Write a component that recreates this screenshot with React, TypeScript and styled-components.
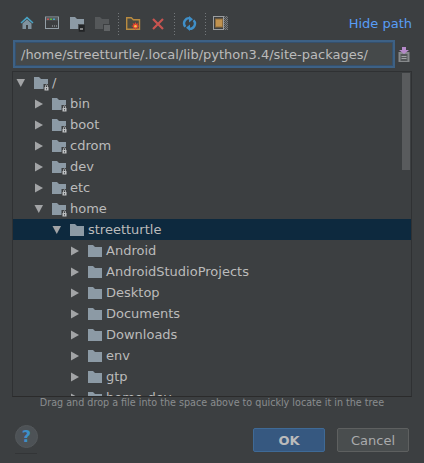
import React from "react";
import styled, { createGlobalStyle } from "styled-components";

const Global = createGlobalStyle`
  html, body { margin: 0; padding: 0; background: #3c3f41; }
  * { box-sizing: border-box; }
`;

const Dialog = styled.div`
  width: 424px;
  height: 463px;
  background: #3c3f41;
  font-family: "DejaVu Sans", sans-serif;
  display: flex;
  flex-direction: column;
  overflow: hidden;
`;

const TopBar = styled.div`
  height: 40px;
  padding: 13px 12px 0 20px;
  display: flex;
  align-items: flex-start;
  justify-content: space-between;
`;

const Tools = styled.div`
  display: flex;
  align-items: flex-start;
  height: 22px;
`;

const ToolSlot = styled.div<{ $w: number }>`
  width: ${(p) => p.$w}px;
  height: 22px;
  padding-top: 3px;
  flex: none;
  svg { display: block; }
`;

const Dots = styled.div`
  width: 8px;
  height: 22px;
  flex: none;
  background-image: linear-gradient(#73777a 1px, transparent 1px);
  background-size: 1px 3px;
  background-repeat: repeat-y;
  background-position: 0 0;
`;

const HideLink = styled.a`
  color: #589df6;
  font-size: 13px;
  line-height: 20px;
  margin-top: 1px;
`;

const PathRow = styled.div`
  height: 31px;
  padding: 0 0 0 13px;
  display: flex;
  align-items: flex-start;
`;

const PathField = styled.div`
  width: 382px;
  height: 28px;
  border: 2px solid #3d6185;
  outline: 1px solid #35506c;
  outline-offset: -3px;
  background: #45494a;
  color: #bbbbbb;
  font-size: 13px;
  line-height: 25px;
  padding-left: 6px;
  white-space: nowrap;
`;

const PasteIcon = styled.div`
  margin: 7px 0 0 3px;
  svg { display: block; }
`;

const TreeBox = styled.div`
  position: relative;
  margin: 0 12px;
  width: 400px;
  height: 326px;
  border: 1px solid #2f3133;
  border-bottom-color: #2b2b2b;
  overflow: hidden;
  flex: none;
`;

const Row = styled.div<{ $selected?: boolean; $level: number }>`
  height: 21px;
  display: flex;
  align-items: center;
  padding-left: ${(p) => 3 + p.$level * 18}px;
  background: ${(p) => (p.$selected ? "#0d293e" : "transparent")};
  color: #bbbbbb;
  font-size: 13px;
  white-space: nowrap;
`;

const Arrow = styled.div`
  width: 18px;
  height: 21px;
  flex: none;
  display: flex;
  align-items: center;
  svg { display: block; }
`;

const FolderSlot = styled.div`
  width: 18px;
  height: 21px;
  padding-top: 2px;
  flex: none;
  display: flex;
  align-items: center;
  svg { display: block; }
`;

const Scrollbar = styled.div`
  position: absolute;
  right: 1px;
  top: 1px;
  width: 8px;
  height: 97px;
  background: #595b5d;
`;

const Hint = styled.div`
  height: 16px;
  text-align: center;
  font-size: 9.6px;
  line-height: 11px;
  color: #8a8d8f;
  white-space: nowrap;
`;

const Footer = styled.div`
  flex: 1;
  padding: 12px 15px 0 15px;
  display: flex;
  align-items: flex-start;
  justify-content: space-between;
`;

const Help = styled.div`
  position: relative;
  width: 23px;
  height: 23px;
  border-radius: 50%;
  background: #4d5256;
  border: 1px solid #54585b;
  color: #3d8fc8;
  font-size: 16px;
  font-weight: bold;
  line-height: 21px;
  text-align: center;
  &::after {
    content: "";
    position: absolute;
    left: -1px;
    top: 27px;
    width: 22px;
    height: 1px;
    background: #333537;
  }
`;

const Buttons = styled.div`
  display: flex;
  gap: 12px;
  margin-top: 3px;
`;

const Button = styled.button<{ $primary?: boolean }>`
  width: 72px;
  height: 24px;
  padding: 1px 0 0;
  border-radius: 2px;
  border: 1px solid ${(p) => (p.$primary ? "#3f6a96" : "#5e6060")};
  background: ${(p) => (p.$primary ? "#365880" : "#494d4e")};
  color: ${(p) => (p.$primary ? "#bbbbbb" : "#a9abac")};
  font-family: "DejaVu Sans", sans-serif;
  font-size: 13px;
  font-weight: ${(p) => (p.$primary ? "bold" : "normal")};
`;

const ArrowIcon = ({ open }: { open: boolean }) =>
  open ? (
    <svg width="10" height="10" viewBox="0 0 10 10">
      <path d="M0.5 1h8.5L4.75 9z" fill="#a2a4a6" />
    </svg>
  ) : (
    <svg width="10" height="10" viewBox="0 0 10 10" style={{ marginLeft: 1 }}>
      <path d="M0 0.5v9L8 5z" fill="#a2a4a6" />
    </svg>
  );

const FolderIcon = ({ locked }: { locked: boolean }) => (
  <svg width="16" height="14" viewBox="0 0 16 14">
    <path d="M0 0h5l2 2h7v10H0z" fill="#8c9aa5" />
    {locked && (
      <g>
        <rect x="9.5" y="7" width="6.5" height="7" fill="#3c3f41" />
        <rect x="10.5" y="10" width="4" height="3.5" fill="#bfc2c4" />
        <path d="M11.5 10V8.8a1 1 0 0 1 2 0V10" fill="none" stroke="#bfc2c4" strokeWidth="0.8" />
        <rect x="12" y="11" width="1" height="1.5" fill="#55585a" />
      </g>
    )}
  </svg>
);

type Node = { label: string; level: number; open?: boolean; locked?: boolean; selected?: boolean };

const nodes: Node[] = [
  { label: "/", level: 0, open: true, locked: true },
  { label: "bin", level: 1, locked: true },
  { label: "boot", level: 1, locked: true },
  { label: "cdrom", level: 1, locked: true },
  { label: "dev", level: 1, locked: true },
  { label: "etc", level: 1, locked: true },
  { label: "home", level: 1, open: true, locked: true },
  { label: "streetturtle", level: 2, open: true, selected: true },
  { label: "Android", level: 3 },
  { label: "AndroidStudioProjects", level: 3 },
  { label: "Desktop", level: 3 },
  { label: "Documents", level: 3 },
  { label: "Downloads", level: 3 },
  { label: "env", level: 3 },
  { label: "gtp", level: 3 },
  { label: "home-dev", level: 3 },
];

export default function App() {
  return (
    <Dialog>
      <Global />
      <TopBar>
        <Tools>
          <ToolSlot $w={25}>
            <svg width="14" height="13" viewBox="0 0 14 13">
              <path d="M7 0.5L0.5 6.5l1 1L7 2.7l5.5 4.8 1-1z" fill="#4aa3c4" />
              <path d="M7 3.6L2.5 7.6V13H6V9h2v4h3.5V7.6z" fill="#7f929e" />
            </svg>
          </ToolSlot>
          <ToolSlot $w={25}>
            <svg width="14" height="13" viewBox="0 0 14 13">
              <rect x="0.5" y="1" width="13" height="11.5" fill="#3c3f41" stroke="#939fa7" />
              <rect x="1" y="1.5" width="12" height="3" fill="#54595c" />
              <rect x="2" y="2.5" width="2" height="1.5" fill="#c75450" />
              <rect x="5" y="2.5" width="2" height="1.5" fill="#62b543" />
              <rect x="8" y="2.5" width="2" height="1.5" fill="#4aa3c4" />
              <rect x="7" y="9.5" width="1" height="1" fill="#a8b0b5" />
              <rect x="9" y="9.5" width="1" height="1" fill="#a8b0b5" />
              <rect x="11" y="9.5" width="1" height="1" fill="#a8b0b5" />
            </svg>
          </ToolSlot>
          <ToolSlot $w={25}>
            <svg width="15" height="15" viewBox="0 0 15 15" style={{ marginTop: 1 }}>
              <path d="M0 0h5l2 2h7v10H0z" fill="#8c9aa5" />
              <rect x="8.5" y="7.5" width="6.5" height="7.5" fill="#222426" stroke="#3c3f41" strokeWidth="0.5" />
              <rect x="10" y="11.5" width="3" height="1" fill="#e0e0e0" />
            </svg>
          </ToolSlot>
          <ToolSlot $w={23}>
            <svg width="15" height="15" viewBox="0 0 15 15" style={{ marginTop: 1 }}>
              <path d="M0 0h5l2 2h7v10H0z" fill="#55585a" />
              <rect x="8" y="7" width="7" height="8" fill="#3c3f41" />
              <rect x="9" y="8" width="6" height="6" fill="#606365" />
            </svg>
          </ToolSlot>
          <Dots />
          <ToolSlot $w={26}>
            <svg width="15" height="15" viewBox="0 0 15 15" style={{ marginTop: 1 }}>
              <path d="M0.7 0.7h4.6l2 2h6.2v9.6H0.7z" fill="#4a4a42" stroke="#b98b40" strokeWidth="1.4" />
              <path d="M9.5 5l0.9 2.1 2-1-0.9 2.2 2.3 0.8-2.3 0.8 0.9 2.2-2-1-0.9 2.1-0.9-2.1-2 1 0.9-2.2-2.3-0.8 2.3-0.8-0.9-2.2 2 1z" fill="#e8432e" />
              <circle cx="9.5" cy="9.2" r="1.3" fill="#f6c04a" />
            </svg>
          </ToolSlot>
          <ToolSlot $w={22}>
            <svg width="12" height="12" viewBox="0 0 12 12" style={{ marginTop: 2 }}>
              <path d="M1 1l10 10M11 1L1 11" stroke="#c75450" strokeWidth="2.2" />
            </svg>
          </ToolSlot>
          <Dots />
          <ToolSlot $w={23}>
            <svg width="15" height="15" viewBox="0 0 15 15">
              <path d="M8 2.2A5.2 5.2 0 0 0 3.4 10.8" fill="none" stroke="#3f8fc8" strokeWidth="2.4" />
              <path d="M7 12.8A5.2 5.2 0 0 0 11.6 4.2" fill="none" stroke="#3f8fc8" strokeWidth="2.4" />
              <path d="M7 0L11 3.2 7 6.4z" fill="#3f8fc8" />
              <path d="M8 15L4 11.8 8 8.6z" fill="#3f8fc8" />
            </svg>
          </ToolSlot>
          <Dots />
          <ToolSlot $w={16}>
            <svg width="15" height="14" viewBox="0 0 15 14">
              <defs>
                <pattern id="chk" width="2" height="2" patternUnits="userSpaceOnUse">
                  <rect width="2" height="2" fill="#77797b" />
                  <rect width="1" height="1" fill="#45484a" />
                  <rect x="1" y="1" width="1" height="1" fill="#45484a" />
                </pattern>
              </defs>
              <rect width="15" height="14" fill="url(#chk)" />
              <rect x="0.5" y="0.5" width="10" height="13" fill="#3c3f41" stroke="#9b9d9f" />
              <rect x="2.5" y="3" width="7" height="8" fill="#c0924f" stroke="#8c6a3b" />
            </svg>
          </ToolSlot>
        </Tools>
        <HideLink>Hide path</HideLink>
      </TopBar>
      <PathRow>
        <PathField>/home/streetturtle/.local/lib/python3.4/site-packages/</PathField>
        <PasteIcon>
          <svg width="12" height="15" viewBox="0 0 12 15">
            <path d="M0.5 5h11v10h-11z" fill="#86898b" />
            <path d="M2.5 7h7v7h-7z" fill="#55585a" />
            <path d="M3.5 9.5h5M3.5 11.5h5" stroke="#a0a2a4" />
            <path d="M4 0h4v3h3L6 7 1 3h3z" fill="#b589c9" />
          </svg>
        </PasteIcon>
      </PathRow>
      <TreeBox>
        <Scrollbar />
        {nodes.map((n) => (
          <Row key={n.label} $level={n.level} $selected={n.selected}>
            <Arrow><ArrowIcon open={!!n.open} /></Arrow>
            <FolderSlot><FolderIcon locked={!!n.locked} /></FolderSlot>
            {n.label}
          </Row>
        ))}
      </TreeBox>
      <Hint>Drag and drop a file into the space above to quickly locate it in the tree</Hint>
      <Footer>
        <Help>?</Help>
        <Buttons>
          <Button $primary>OK</Button>
          <Button>Cancel</Button>
        </Buttons>
      </Footer>
    </Dialog>
  );
}
